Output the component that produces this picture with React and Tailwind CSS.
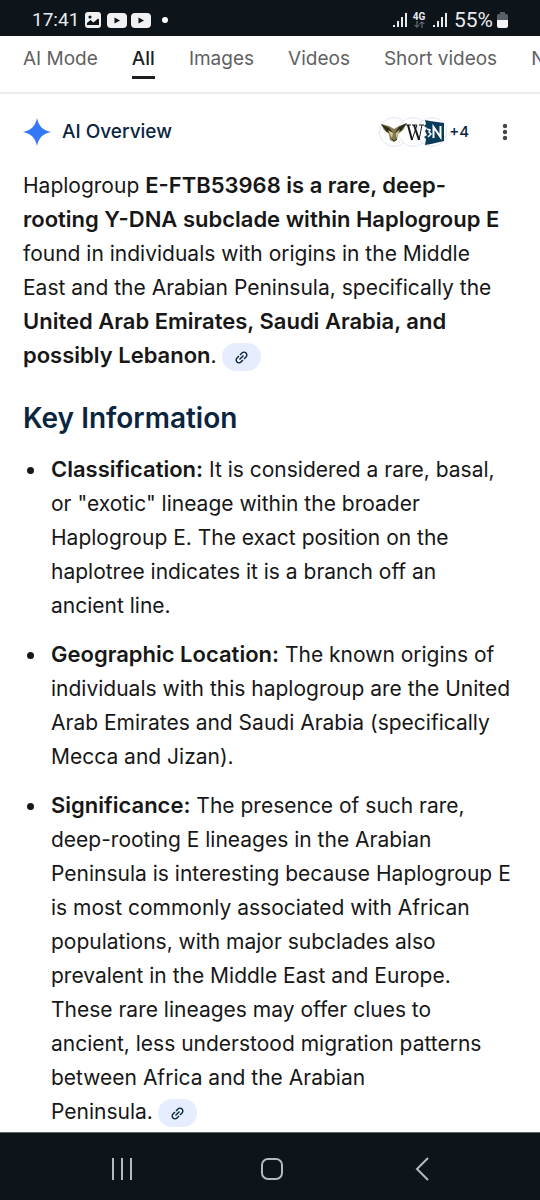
import React from 'react';

const tabs = ['AI Mode', 'All', 'Images', 'Videos', 'Short videos', 'News'];

const keyPoints = [
  {
    title: 'Classification:',
    lines: [
      'It is considered a rare, basal,',
      'or "exotic" lineage within the broader',
      'Haplogroup E. The exact position on the',
      'haplotree indicates it is a branch off an',
      'ancient line.',
    ],
  },
  {
    title: 'Geographic Location:',
    lines: [
      'The known origins of',
      'individuals with this haplogroup are the United',
      'Arab Emirates and Saudi Arabia (specifically',
      'Mecca and Jizan).',
    ],
  },
  {
    title: 'Significance:',
    lines: [
      'The presence of such rare,',
      'deep-rooting E lineages in the Arabian',
      'Peninsula is interesting because Haplogroup E',
      'is most commonly associated with African',
      'populations, with major subclades also',
      'prevalent in the Middle East and Europe.',
      'These rare lineages may offer clues to',
      'ancient, less understood migration patterns',
      'between Africa and the Arabian',
      'Peninsula.',
    ],
    hasSource: true,
  },
];

const Signal = () => (
  <svg width="14" height="15" viewBox="0 0 14 15" fill="#e8eaec" aria-hidden="true">
    <rect x="0" y="12" width="2" height="2" />
    <rect x="4" y="8" width="2" height="6" />
    <rect x="8" y="4" width="2" height="10" />
    <rect x="12" y="0" width="2" height="14" />
  </svg>
);

const VideoBadge = () => (
  <svg width="20" height="15" viewBox="0 0 20 15" aria-hidden="true">
    <rect width="20" height="15" rx="4" fill="#f1f1f1" />
    <path d="M7.5 4.5v6l5.5-3z" fill="#0d141a" />
  </svg>
);

const StatusBar = () => (
  <header className="flex h-9 shrink-0 items-center bg-[#0d141a] pt-1 pr-8 pl-8 font-[Roboto,sans-serif] text-[#e8eaec]">
    <span className="text-[19px] leading-6">17:41</span>
    <div className="ml-[6px] flex items-center gap-[6px]">
      <svg width="16" height="16" viewBox="0 0 16 16" aria-hidden="true">
        <rect width="16" height="16" rx="3" fill="#f1f1f1" />
        <circle cx="5" cy="5" r="1.6" fill="#0d141a" />
        <path d="M2 13V11l3.500-3 3 2.500L13 6.500l1 1V13z" fill="#0d141a" />
      </svg>
      <div className="flex gap-1">
        <VideoBadge />
        <VideoBadge />
      </div>
    </div>
    <span className="ml-[11px] h-[6px] w-[6px] rounded-full bg-white" />
    <div className="ml-auto flex items-center">
      <Signal />
      <div className="ml-[6px] flex w-3 flex-col items-center">
        <span className="text-[10px] leading-[9px] font-bold">4G</span>
        <svg width="11" height="7" viewBox="0 0 11 7" fill="none" stroke="#7d8388" aria-hidden="true">
          <path d="M3 0v6M.5 3.8L3 6.300l2.500-2.500M8 7V1M5.500 3.200L8 .7l2.500 2.500" />
        </svg>
      </div>
      <span className="ml-2">
        <Signal />
      </span>
      <span className="ml-[7px] text-[21px] leading-6">55%</span>
      <svg className="ml-1" width="11" height="16" viewBox="0 0 11 16" aria-hidden="true">
        <path d="M3 0h5v2h1.500q1.500 0 1.500 1.500V8H0V3.500Q0 2 1.500 2H3z" fill="#5b6065" />
        <path d="M0 8h11v6q0 2-2 2H2q-2 0-2-2z" fill="#f4f4f4" />
      </svg>
    </div>
  </header>
);

const Tabs = () => (
  <nav className="flex h-[58px] shrink-0 gap-[34px] overflow-hidden border-b-2 border-[#ebebeb] pt-[9px] pl-[23px]">
    {tabs.map((tab) => (
      <a
        key={tab}
        href="#results"
        className={
          tab === 'All'
            ? 'flex h-[34px] shrink-0 flex-col justify-between text-[19px] leading-7 font-medium text-[#1f1f1f]'
            : 'shrink-0 text-[19px] leading-7 text-[#5f6163]'
        }
      >
        {tab}
        {tab === 'All' && <span className="h-[3px] shrink-0 bg-[#1f1f1f]" />}
      </a>
    ))}
  </nav>
);

const SourceIcons = () => (
  <button
    type="button"
    className="ml-auto flex items-center text-[15px] leading-6 font-medium text-[#0a2540]"
  >
    <svg width="68" height="30" viewBox="0 0 68 30" aria-hidden="true">
      <g fill="#fff" stroke="#e1e6f8">
        <circle cx="15" cy="15" r="14.500" />
        <circle cx="34" cy="15" r="14.500" />
        <circle cx="53" cy="15" r="14.500" />
      </g>
      <path d="M2 7l8 2 5 3 5-3 8-3-4 7-5 4-1 6-3 2-4-2-1-6-5-4z" fill="#81784d" />
      <path d="M2 7l8 4 4 5-6-1zM28 6l-8 4-4 6 6-2z" fill="#2a271b" />
      <path d="M9 13l5 3-1 5zM21 12l-4 4v5z" fill="#d8cf9a" />
      <path d="M13 22l2 2 3-2" fill="none" stroke="#37321f" />
      <g fill="none" stroke="#181818">
        <path d="M27 8h5M33 8h5M40 8h5" strokeWidth="1" />
        <path d="M29 8l4 15M35 8l5 15" strokeWidth="2" />
        <path d="M33 23l5-15M40 23l3-15" strokeWidth="1" />
      </g>
      <path d="M46 3l5 1 14 2v18l-13 3-6 1 1-6-2-2 3-2-2-4 2-3-3-2 2-2z" fill="#0b3b5b" />
      <path d="M48 12l3 1-1 2 2 2-3 3" fill="none" stroke="#fff" strokeWidth="1.500" />
      <path d="M54.500 21V10l7 10V9" fill="none" stroke="#fff" strokeWidth="2" />
    </svg>
    <span className="ml-[2px]">+4</span>
  </button>
);

const SourceLink = () => (
  <button
    type="button"
    aria-label="View related links"
    className="ml-[5px] inline-flex h-7 w-[39px] items-center justify-center rounded-full bg-[#e5edff] align-middle"
  >
    <svg
      width="17"
      height="17"
      viewBox="0 0 24 24"
      fill="#0a2540"
      className="-rotate-45"
      aria-hidden="true"
    >
      <path d="M11 17H7q-2.075 0-3.537-1.463T2 12t1.463-3.537T7 7h4v2H7q-1.250 0-2.125.875T4 12t.875 2.125T7 15h4zm-3-4v-2h8v2zm5 4v-2h4q1.250 0 2.125-.875T20 12t-.875-2.125T17 9h-4V7h4q2.075 0 3.538 1.463T22 12t-1.463 3.538T17 17z" />
    </svg>
  </button>
);

// shorter line height keeps the bigger bold text from stretching its line
const Strong = ({ children }) => (
  <strong className="text-[22px] leading-7 font-semibold">{children}</strong>
);

const NavBar = () => (
  <footer className="grid h-[68px] shrink-0 grid-cols-[1fr_64px_1fr] items-center border-t border-[#5d666b] bg-[#0d141a] pt-1 pl-1">
    <button type="button" aria-label="Recent apps" className="flex justify-center">
      <svg width="22" height="22" viewBox="0 0 22 22" stroke="#b5babd" strokeWidth="2" aria-hidden="true">
        <path d="M2 0v22M11 0v22M20 0v22" />
      </svg>
    </button>
    <button type="button" aria-label="Home" className="flex justify-center">
      <svg width="24" height="24" viewBox="0 0 24 24" fill="none" stroke="#b5babd" strokeWidth="2" aria-hidden="true">
        <rect x="2" y="2" width="20" height="20" rx="6" />
      </svg>
    </button>
    <button type="button" aria-label="Back" className="flex justify-center">
      <svg width="14" height="24" viewBox="0 0 14 24" fill="none" stroke="#b5babd" strokeWidth="2" aria-hidden="true">
        <path d="M13 1L2 12l11 11" />
      </svg>
    </button>
  </footer>
);

const App = () => (
  <div className="flex min-h-screen flex-col bg-white font-[Inter,sans-serif] text-[#171717]">
    <StatusBar />
    <Tabs />
    <main id="results" className="flex-1 px-[23px] text-[21px] leading-[34px] whitespace-nowrap">
      <div className="flex h-[75px] items-center">
        <svg width="28" height="28" viewBox="0 0 28 28" fill="#3478f6" aria-hidden="true">
          <path d="M14 0c1.500 8 6 12.500 14 14-8 1.500-12.500 6-14 14C12.500 20 8 15.500 0 14 8 12.500 12.500 8 14 0z" />
        </svg>
        <span className="ml-[11px] text-[19px] font-medium text-[#0a2540]">AI Overview</span>
        <SourceIcons />
        <button type="button" aria-label="More options" className="mr-1 ml-7 flex w-4 justify-center">
          <svg width="6" height="18" viewBox="0 0 6 18" fill="#444746" aria-hidden="true">
            <circle cx="3" cy="3" r="2.200" />
            <circle cx="3" cy="9" r="2.200" />
            <circle cx="3" cy="15" r="2.200" />
          </svg>
        </button>
      </div>

      <p>
        Haplogroup <Strong>E-FTB53968 is a rare, deep-</Strong>
        <br />
        <Strong>rooting Y-DNA subclade within Haplogroup E</Strong>
        <br />
        found in individuals with origins in the Middle
        <br />
        East and the Arabian Peninsula, specifically the
        <br />
        <Strong>United Arab Emirates, Saudi Arabia, and</Strong>
        <br />
        <Strong>possibly Lebanon</Strong>.
        <SourceLink />
      </p>

      <h2 className="mt-7 text-[28px] font-semibold text-[#0a2540]">Key Information</h2>

      <ul className="mt-[18px] flex flex-col gap-[15px] pl-1">
        {keyPoints.map((point) => (
          <li key={point.title} className="flex gap-[17px]">
            <span className="mt-[14px] h-[7px] w-[7px] shrink-0 rounded-full bg-[#171717]" />
            <div>
              <Strong>{point.title}</Strong>{' '}
              {point.lines.map((line, i) => (
                <React.Fragment key={line}>
                  {i > 0 && <br />}
                  {line}
                </React.Fragment>
              ))}
              {point.hasSource && <SourceLink />}
            </div>
          </li>
        ))}
      </ul>
    </main>
    <NavBar />
  </div>
);

export default App;
